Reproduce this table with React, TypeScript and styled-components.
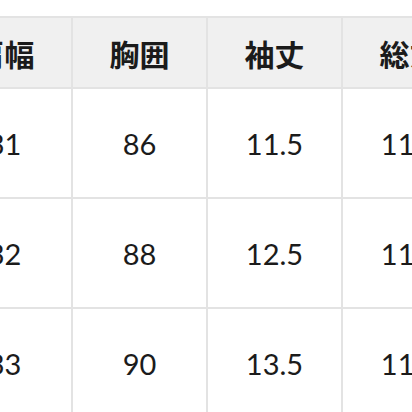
import React from "react";
import styled, { createGlobalStyle } from "styled-components";

const Global = createGlobalStyle`
  html, body {
    margin: 0;
    padding: 0;
    background: #ffffff;
    width: 412px;
    height: 412px;
    overflow: hidden;
  }
`;

const Page = styled.div`
  width: 412px;
  height: 412px;
  overflow: hidden;
  padding-top: 16px;
  box-sizing: border-box;
`;

const Grid = styled.div`
  display: grid;
  grid-template-columns: repeat(4, 133px);
  grid-template-rows: 69px repeat(3, 108px);
  gap: 2px;
  padding: 2px;
  background: #e3e3e3;
  width: max-content;
  margin-left: -64px;
`;

const Cell = styled.div<{ $head?: boolean }>`
  display: flex;
  align-items: center;
  justify-content: center;
  background: ${(p) => (p.$head ? "#f0f0f0" : "#ffffff")};
  color: #1b1b1b;
  font-family: ${(p) =>
    p.$head
      ? '"Noto Sans CJK JP", sans-serif'
      : 'Lato, "Noto Sans CJK JP", sans-serif'};
  font-weight: ${(p) => (p.$head ? 700 : 400)};
  font-size: ${(p) => (p.$head ? "30px" : "29px")};
  line-height: 1;
  white-space: nowrap;
`;

const headers = ["肩幅", "胸囲", "袖丈", "総丈"];
const rows = [
  ["31", "86", "11.5", "11.5"],
  ["32", "88", "12.5", "11.5"],
  ["33", "90", "13.5", "11.5"],
];

export default function App() {
  return (
    <>
      <Global />
      <Page>
        <Grid>
          {headers.map((h) => (
            <Cell $head key={h}>
              {h}
            </Cell>
          ))}
          {rows.map((r, i) =>
            r.map((v, j) => <Cell key={`${i}-${j}`}>{v}</Cell>)
          )}
        </Grid>
      </Page>
    </>
  );
}
